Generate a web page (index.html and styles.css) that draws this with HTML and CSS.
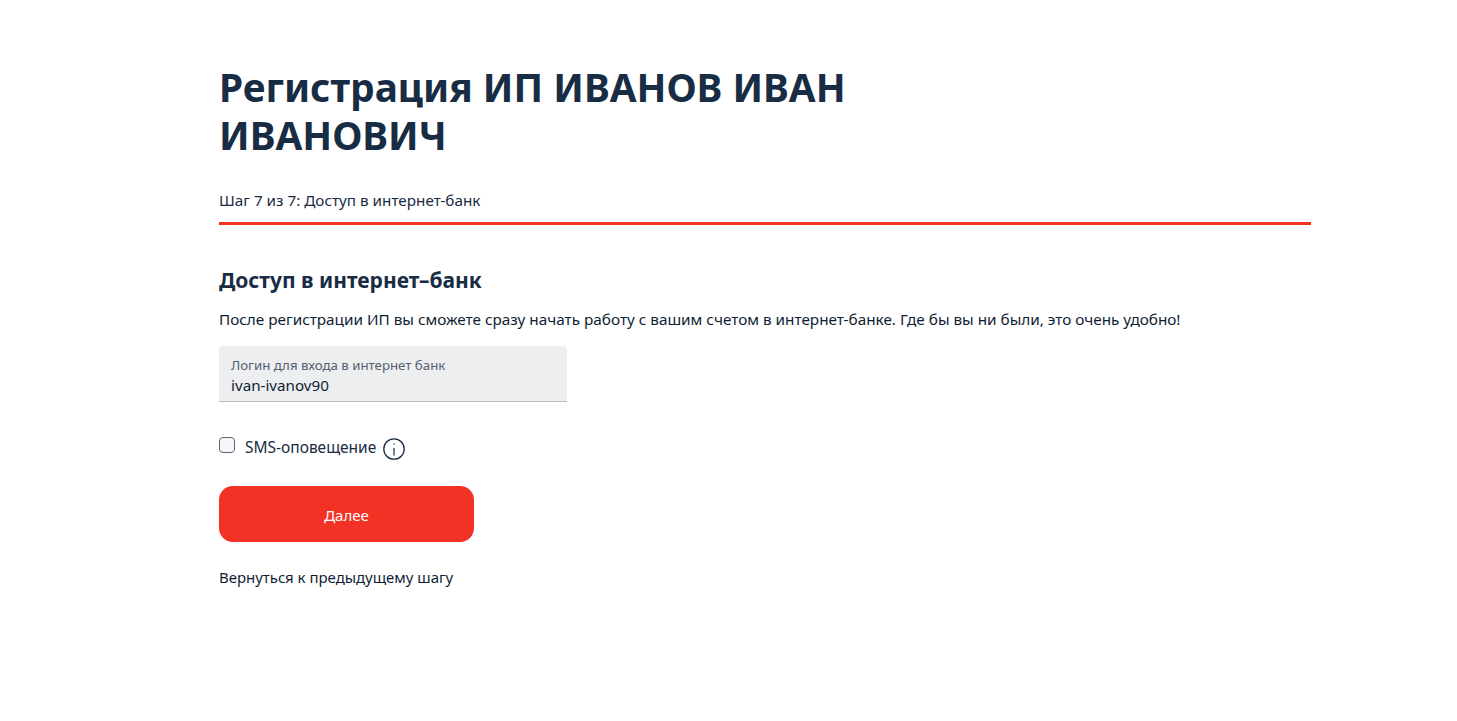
FILE: index.html
```html
<!DOCTYPE html>
<html lang="ru">
<head>
    <meta charset="UTF-8" />
    <meta name="viewport" content="width=device-width, initial-scale=1.0" />
    <title>Регистрация ИП</title>
    <link rel="stylesheet" href="styles.css">
</head>
<body>
    <main class="container">
        <h1 class="title">Регистрация ИП ИВАНОВ ИВАН ИВАНОВИЧ</h1>
        <div class="step">Шаг 7 из 7: Доступ в интернет-банк</div>
        <div class="progress"></div>

        <h2 class="section-title">Доступ в интернет–банк</h2>
        <p class="description">После регистрации ИП вы сможете сразу начать работу с вашим счетом в интернет-банке. Где бы вы ни были, это очень удобно!</p>

        <div class="field">
            <label class="field-label" for="login">Логин для входа в интернет банк</label>
            <input class="field-input" id="login" type="text" value="ivan-ivanov90">
        </div>

        <div class="check-row">
            <input class="checkbox" id="sms" type="checkbox">
            <label class="check-label" for="sms">SMS-оповещение</label>
            <svg class="info-icon" width="22" height="22" viewBox="0 0 22 22" fill="none" stroke="#1a2b42">
                <circle cx="11" cy="11" r="10.2" stroke-width="1.3"/>
                <path d="M11 10v7.5" stroke-width="1.2"/>
                <path d="M11 5.5v1.3" stroke-width="1.2"/>
            </svg>
        </div>

        <button class="next-button">Далее</button>
        <a class="back-link" href="#">Вернуться к предыдущему шагу</a>
    </main>
</body>
</html>
```

FILE: styles.css
```css
body {
    margin: 0;
    background-color: #fff;
    color: #1a2b42;
    font-family: "Noto Sans", "Open Sans", sans-serif;
    font-size: 15px;
}

.container {
    width: 1092px;
    margin-left: 219px;
    padding-top: 63px;
    display: flex;
    flex-direction: column;
    align-items: flex-start;
}

.title {
    width: 680px;
    margin: 0 0 30px;
    font-size: 38.85px;
    line-height: 48px;
    font-weight: 700;
    color: #182c44;
}

.step {
    font-size: 15.25px;
    line-height: 22px;
    margin-bottom: 11px;
}

.progress {
    width: 100%;
    height: 3px;
    background-color: #f13224;
    margin-bottom: 41px;
}

.section-title {
    margin: 0 0 14px;
    font-size: 21px;
    line-height: 28px;
    font-weight: 700;
    color: #182c44;
}

.description {
    margin: 0 0 16px;
    font-size: 15.3px;
    line-height: 22px;
    color: #0f1e33;
}

.field {
    width: 348px;
    height: 56px;
    box-sizing: border-box;
    padding: 11px 12px 0;
    background-color: #edeef0;
    border-bottom: 1px solid #b9bcc3;
    border-radius: 4px 4px 0 0;
    display: flex;
    flex-direction: column;
}

.field-label {
    font-size: 13.25px;
    line-height: 17px;
    margin-bottom: 1px;
    color: #55606f;
}

.field-input {
    border: none;
    background: none;
    padding: 0;
    margin: 0;
    font-family: inherit;
    font-size: 15.2px;
    line-height: 20px;
    color: #0f1e33;
    outline: none;
}

.check-row {
    display: flex;
    align-items: center;
    margin-top: 33px;
    height: 24px;
}

.checkbox {
    appearance: none;
    width: 16px;
    height: 16px;
    margin: 0 10px 5px 0;
    border: 1px solid #5b6878;
    border-radius: 4px;
    background-color: #f7f8f9;
}

.check-label {
    font-size: 15.5px;
}

.info-icon {
    margin-left: 7px;
    margin-top: 4px;
}

.next-button {
    width: 255px;
    height: 56px;
    margin-top: 27px;
    padding: 2px 0 0;
    border: none;
    border-radius: 14px;
    background-color: #f13224;
    color: #fff;
    font-family: inherit;
    font-size: 15px;
    cursor: pointer;
}

.back-link {
    margin-top: 24px;
    font-size: 14.95px;
    line-height: 22px;
    color: #0f1e33;
    text-decoration: none;
}
```
